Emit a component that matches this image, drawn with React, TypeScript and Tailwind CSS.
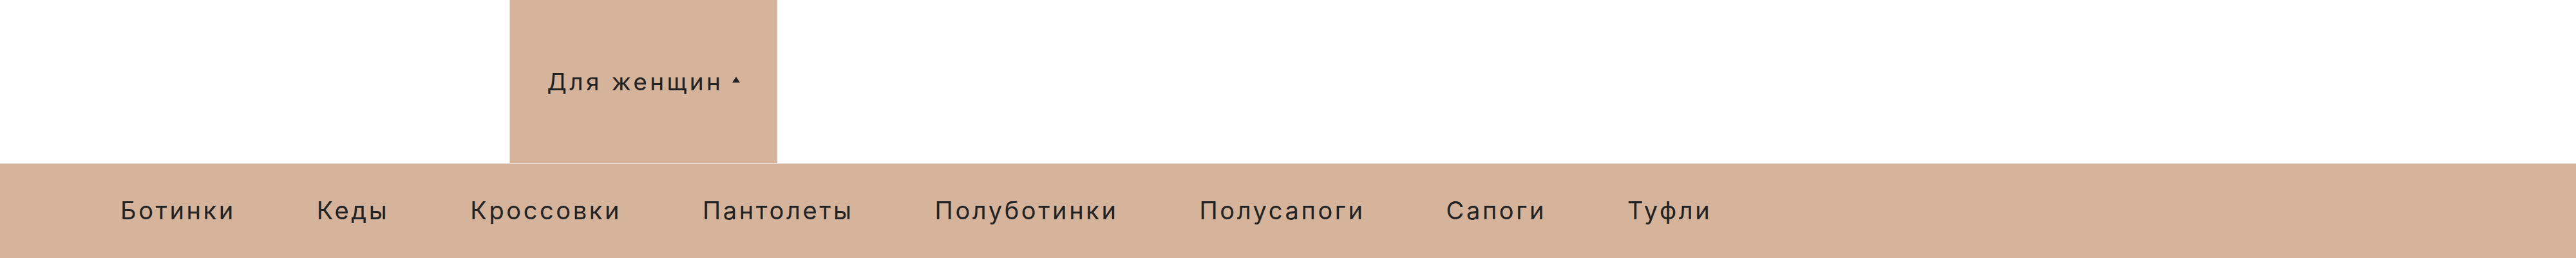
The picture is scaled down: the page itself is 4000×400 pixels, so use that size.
const items = ["Ботинки", "Кеды", "Кроссовки", "Пантолеты", "Полуботинки", "Полусапоги", "Сапоги", "Туфли"];

const font = { fontFamily: "Inter, 'Open Sans', sans-serif" };

export default function App() {
  return (
    <div className="w-[4000px] h-[400px] bg-white flex flex-col text-[#222222]" style={font}>
      <div className="h-[253px] flex">
        <button className="ml-[791px] w-[416px] h-full bg-[#d6b39b] flex items-center justify-center gap-[14px] border-l border-[#e9dcd2]">
          <span className="text-[37px] tracking-[4.4px] leading-none">Для женщин</span>
          <svg width="12" height="9" viewBox="0 0 12 9" className="mt-[-6px]">
            <path d="M6 0 L12 9 L0 9 Z" fill="#222222" />
          </svg>
        </button>
      </div>
      <nav className="h-[147px] bg-[#d6b39b] border-t border-[#e6dcd5] flex items-center pl-[124px] pb-[3px]">
        {items.map((item) => (
          <a key={item} className="px-[63px] text-[38px] leading-none tracking-[3.6px]">
            {item}
          </a>
        ))}
      </nav>
    </div>
  );
}
